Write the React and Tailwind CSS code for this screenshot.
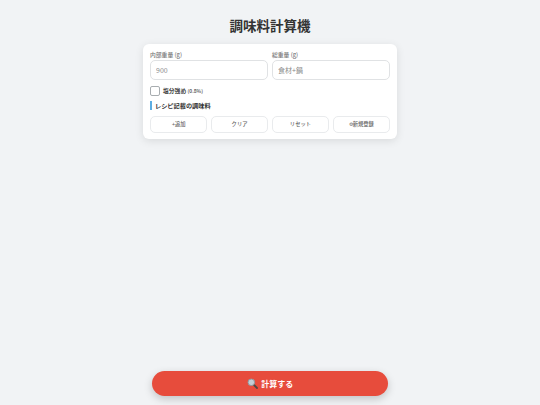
const FONT = "font-['Noto_Sans_CJK_JP','Noto_Sans',sans-serif]";

function Field({ label, placeholder }) {
  return (
    <div className="flex-1">
      <label className="block text-[5.8px] leading-[8px] font-medium text-[#777777] mb-[1px]">{label}</label>
      <input
        readOnly
        placeholder={placeholder}
        className="block w-full h-[20px] rounded-[5px] border border-[#e0e2e4] bg-white px-[5px] text-[7px] placeholder:text-[#8a8a8a] outline-none"
      />
    </div>
  );
}

function ActionButton({ children }) {
  return (
    <button className="flex-1 h-[16.5px] pt-[1px] rounded-[5px] border border-[#e9ebed] bg-white text-[5.3px] font-medium text-[#666666]">
      {children}
    </button>
  );
}

function SearchIcon() {
  return (
    <svg width="11" height="11" viewBox="0 0 11 11">
      <line x1="6.5" y1="6.5" x2="10" y2="10" stroke="#4f4844" strokeWidth="1.8" strokeLinecap="round" />
      <circle cx="4.3" cy="4.3" r="3.3" fill="#c3ced6" stroke="#8f989e" strokeWidth="1" />
    </svg>
  );
}

export default function App() {
  return (
    <div className={`h-[405px] bg-[#f1f3f5] flex flex-col items-center overflow-hidden ${FONT}`}>
      <h1 className="mt-[15px] h-[20px] leading-[20px] text-[13.5px] font-bold text-[#333333]">調味料計算機</h1>

      <div className="mt-[9px] w-[254px] h-[95px] rounded-[6px] bg-white px-[7px] pt-[7px] shadow-[0_2px_8px_rgba(0,0,0,0.1)]">
        <div className="flex gap-[4px]">
          <Field label="内部重量 (g)" placeholder="900" />
          <Field label="総重量 (g)" placeholder="食材+鍋" />
        </div>

        <div className="mt-[6px] flex items-center gap-[3.5px]">
          <span className="w-[9.5px] h-[9.5px] rounded-[2px] border border-[#a8adb0] bg-white" />
          <span className="text-[5.8px] leading-[9px] font-bold text-[#444444]">
            塩分強め <span className="text-[5px] font-medium">(0.8%)</span>
          </span>
        </div>

        <div className="mt-[5.5px] h-[9px] border-l-2 border-[#5dade2] pl-[3px] text-[6.2px] leading-[9px] font-bold text-[#333333]">
          レシピ記載の調味料
        </div>

        <div className="mt-[6px] flex gap-[3.5px]">
          <ActionButton>+追加</ActionButton>
          <ActionButton>クリア</ActionButton>
          <ActionButton>リセット</ActionButton>
          <ActionButton>⚙新規登録</ActionButton>
        </div>
      </div>

      <button className="mt-auto mb-[9px] w-[236px] h-[25px] rounded-full bg-[#e74c3c] text-[8px] font-bold text-white flex items-center justify-center gap-[3.5px] shadow-[0_3px_8px_rgba(0,0,0,0.2)]">
        <SearchIcon />
        計算する
      </button>
    </div>
  );
}
